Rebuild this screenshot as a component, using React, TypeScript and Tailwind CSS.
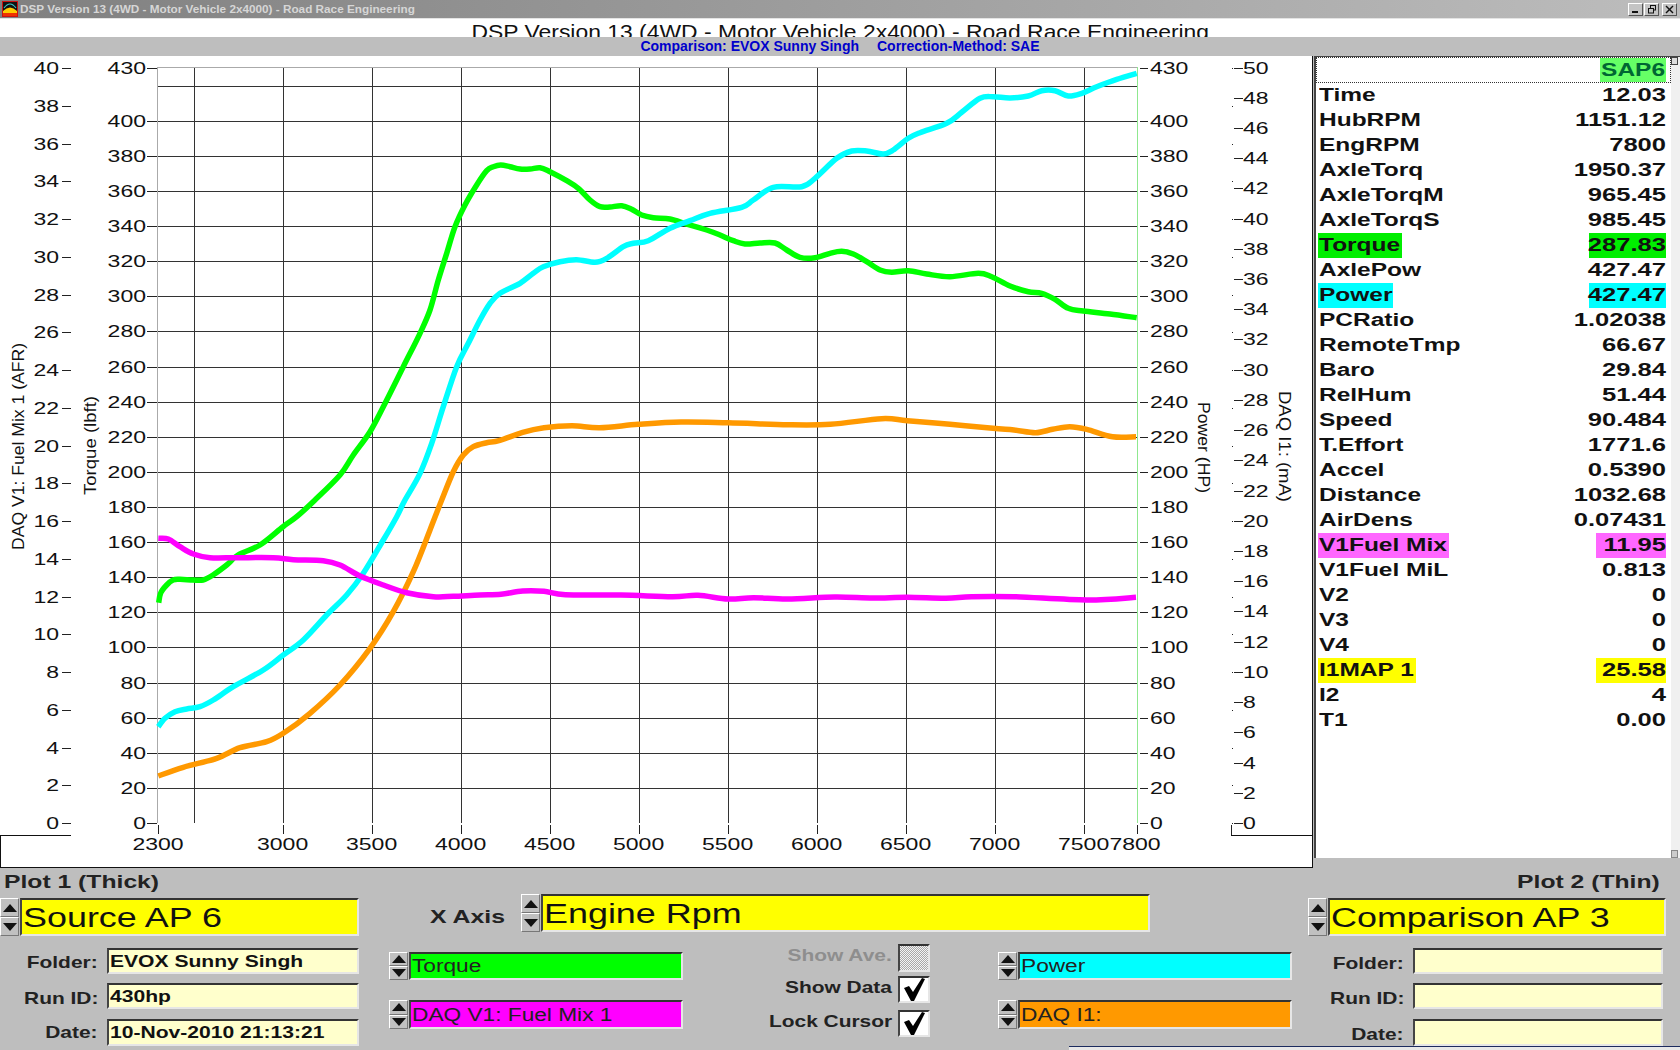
import type { ReactNode } from 'react'

type Point = [number, number]

const TORQUE: Point[] = [[158.7,602.7],[160.7,593],[166.7,585],[173,580],[180,579.3],[193,580],[203,580],[213,575],[226.7,565],[238,555],[260,545],[283,526.7],[296.7,516.7],[315,500],[340,475],[353.3,455],[370,431.7],[383.3,406.7],[403.3,366.7],[420,333.3],[430,310],[438.3,280],[446.7,253.3],[455,226.7],[465,205],[476.7,185],[486.7,170.7],[493.3,166.7],[500.7,165],[510,166.7],[520,169],[530,169],[540,167.7],[550,171.7],[566.7,180.7],[578.3,188.3],[590,200],[600,206.7],[610,207],[621.7,205.7],[631.7,209.3],[641.7,215],[653.3,217.7],[670,219],[686.7,224],[706.7,230],[720,235],[733.3,240.7],[745,244],[760,243],[775,243],[786.7,250],[800,257.3],[815,257.7],[830,253.3],[841.7,251.3],[853.3,254],[866.7,261.7],[880,270],[891.7,272.3],[908.3,270.7],[926.7,274],[950,276.7],[978.3,273.3],[991.7,276.7],[1010,286],[1028.3,291.7],[1041.7,293.3],[1055,299.3],[1068.3,308.3],[1083.3,311],[1110,314],[1136.7,317.7]]

const POWER: Point[] = [[158.3,726.7],[165,718.3],[175,711.7],[186.7,709],[200,706.7],[213.3,700],[233.3,686.7],[263.3,670],[283.3,655],[303.3,640],[326.7,615],[346.7,595],[363.3,573.3],[383.3,540],[396.7,516.7],[405,500],[420,473.3],[431.7,443.3],[443.3,406.7],[456.7,366.7],[468.3,343.3],[480,320],[490,303.3],[500,293.3],[520,283.3],[533.3,273.3],[543.3,266.7],[560,261.7],[576.7,259.7],[595,262.3],[606.7,258.3],[623.3,246.7],[633.3,243.3],[648.3,240.7],[670,228.3],[690,220.7],[710,213.3],[741.7,207.3],[753.3,200],[773.3,187.3],[801.7,186.7],[815,178.3],[836.7,158.3],[851.7,151],[866.7,151],[883.3,154],[893.3,150],[908.3,138.3],[920,132.7],[946.7,123.3],[961.7,112.3],[980,98.3],[993.3,96.7],[1010,98],[1028.3,96],[1041.7,90.7],[1055,90.7],[1068.3,96],[1081.7,93.3],[1096.7,86.7],[1116.7,79.3],[1136.7,73.3]]

const FUEL: Point[] = [[158.3,538.3],[168.3,539],[180,546.7],[193.3,554],[210,557.7],[236.7,557.7],[273.3,557.7],[293.3,559.7],[323.3,560.7],[340,565],[360,576],[383.3,585],[406.7,592.7],[433.3,596.7],[453.3,596.3],[480,595],[501,594.3],[522.7,591],[544,591.3],[565.5,594.7],[621,595],[672,596.7],[698,595.3],[728,599],[753.5,597.7],[787.7,599],[834.7,597],[873,598],[907,597.3],[945.8,598.3],[971.5,596.7],[1014,596.7],[1086.8,600],[1136,597.3]]

const DAQ_I1: Point[] = [[158.3,776],[183.3,767.3],[216.7,758.3],[240,747.7],[266.7,741.7],[283.3,733.3],[310,713.3],[340,685],[370,648.3],[393.3,611.7],[413.3,571.7],[430,530],[441.7,500],[453.3,471.7],[463.3,455],[473.3,446.7],[486.7,442.7],[499,440.7],[522.7,432.3],[544,427.7],[572,425.7],[599.7,427.7],[638,424.3],[681,422],[728,422.7],[787.7,424.7],[830.4,424.3],[881.7,418.7],[907.4,420.7],[950,424.3],[992.8,428.3],[1014,430],[1035.6,432.7],[1052.6,429.3],[1069.7,426.7],[1086.8,429.3],[1112.5,436.7],[1136,436.7]]

const ROWS: { label: string; value: string; labelBg?: string; valueBg?: string }[] = [
  { label: 'Time', value: '12.03' },
  { label: 'HubRPM', value: '1151.12' },
  { label: 'EngRPM', value: '7800' },
  { label: 'AxleTorq', value: '1950.37' },
  { label: 'AxleTorqM', value: '965.45' },
  { label: 'AxleTorqS', value: '985.45' },
  { label: 'Torque', value: '287.83', labelBg: 'w-[84px] bg-[#00ee00]', valueBg: 'w-[77px] bg-[#00ee00]' },
  { label: 'AxlePow', value: '427.47' },
  { label: 'Power', value: '427.47', labelBg: 'w-[75px] bg-[#00ffff]', valueBg: 'w-[77px] bg-[#00ffff]' },
  { label: 'PCRatio', value: '1.02038' },
  { label: 'RemoteTmp', value: '66.67' },
  { label: 'Baro', value: '29.84' },
  { label: 'RelHum', value: '51.44' },
  { label: 'Speed', value: '90.484' },
  { label: 'T.Effort', value: '1771.6' },
  { label: 'Accel', value: '0.5390' },
  { label: 'Distance', value: '1032.68' },
  { label: 'AirDens', value: '0.07431' },
  { label: 'V1Fuel Mix', value: '11.95', labelBg: 'w-[131px] bg-[#ff66ff]', valueBg: 'w-[70px] bg-[#ff66ff]' },
  { label: 'V1Fuel MiL', value: '0.813' },
  { label: 'V2', value: '0' },
  { label: 'V3', value: '0' },
  { label: 'V4', value: '0' },
  { label: 'I1MAP 1', value: '25.58', labelBg: 'w-[98px] bg-[#ffff00]', valueBg: 'w-[70px] bg-[#ffff00]' },
  { label: 'I2', value: '4' },
  { label: 'T1', value: '0.00' },
]

const DIGIT = 12.8
const yMain = (v: number) => 823 - v * 1.7555
const xRpm = (r: number) => 283 + (r - 3000) * 0.178

// catmull-rom through the traced points
function smooth(pts: Point[]) {
  let d = `M${pts[0][0]} ${pts[0][1]}`
  for (let i = 0; i < pts.length - 1; i++) {
    const p0 = pts[Math.max(i - 1, 0)]
    const p1 = pts[i]
    const p2 = pts[i + 1]
    const p3 = pts[Math.min(i + 2, pts.length - 1)]
    const c1x = p1[0] + (p2[0] - p0[0]) / 6
    const c1y = p1[1] + (p2[1] - p0[1]) / 6
    const c2x = p2[0] - (p3[0] - p1[0]) / 6
    const c2y = p2[1] - (p3[1] - p1[1]) / 6
    d += `C${c1x.toFixed(1)} ${c1y.toFixed(1)} ${c2x.toFixed(1)} ${c2y.toFixed(1)} ${p2[0]} ${p2[1]}`
  }
  return d
}

function AxisText({ x, y, children }: { x: number; y: number; children: string }) {
  return (
    <text x={x} y={y + 6} fontSize={17} fill="#111" textLength={children.length * DIGIT} lengthAdjust="spacingAndGlyphs">
      {children}
    </text>
  )
}

function SideTitle({ x, y, rotate, length, children }: { x: number; y: number; rotate: number; length: number; children: string }) {
  return (
    <text transform={`translate(${x} ${y}) rotate(${rotate})`} fontSize={16} fill="#111" textLength={length} lengthAdjust="spacingAndGlyphs">
      {children}
    </text>
  )
}

function Chart() {
  const hGrid = [20, 40, 60, 80, 100, 120, 140, 160, 180, 200, 220, 240, 260, 280, 300, 320, 340, 360, 380, 400, 420]
  const mainLabels = [0, ...hGrid.filter((v) => v !== 420), 430]
  const vGrid = [2500, 3000, 3500, 4000, 4500, 5000, 5500, 6000, 6500, 7000, 7500]
  const xLabels = [2300, 3000, 3500, 4000, 4500, 5000, 5500, 6000, 6500, 7000, 7500, 7800]
  const afr = Array.from({ length: 21 }, (_, i) => i * 2)
  const daq = Array.from({ length: 26 }, (_, i) => i * 2)

  return (
    <svg width={1312} height={811} viewBox="0 56 1312 811" className="block">
      <g shapeRendering="crispEdges">
        {hGrid.map((v) => (
          <line key={v} x1={158} x2={1137} y1={Math.round(yMain(v)) + 0.5} y2={Math.round(yMain(v)) + 0.5} stroke="#333" />
        ))}
        {vGrid.map((r) => (
          <line key={r} x1={Math.round(xRpm(r)) + 0.5} x2={Math.round(xRpm(r)) + 0.5} y1={68} y2={823} stroke="#333" />
        ))}
        <line x1={158} x2={1137} y1={67.5} y2={67.5} stroke="#aaa" />
        <line x1={157.5} x2={157.5} y1={67} y2={823} stroke="#aaa" />
        <line x1={1137.5} x2={1137.5} y1={67} y2={823} stroke="#8fe88f" />

        {mainLabels.map((v) => (
          <g key={v} stroke="#222">
            <line x1={147} x2={157} y1={Math.round(yMain(v)) + 0.5} y2={Math.round(yMain(v)) + 0.5} />
            <line x1={1140} x2={1148} y1={Math.round(yMain(v)) + 0.5} y2={Math.round(yMain(v)) + 0.5} />
          </g>
        ))}
        {afr.map((v) => (
          <line key={v} x1={62} x2={71} y1={Math.round(823 - v * 18.875) + 0.5} y2={Math.round(823 - v * 18.875) + 0.5} stroke="#222" />
        ))}
        {daq.map((v) => (
          <line key={v} x1={1234} x2={1243} y1={Math.round(823 - v * 15.11) + 0.5} y2={Math.round(823 - v * 15.11) + 0.5} stroke="#222" />
        ))}
        {afr.map((v) => (
          <rect key={v} x={1232} y={Math.round(823 - v * 18.875)} width={1} height={1} fill="#222" />
        ))}
        {xLabels.map((r) => (
          <line key={r} x1={Math.round(xRpm(r)) + 0.5} x2={Math.round(xRpm(r)) + 0.5} y1={825} y2={834} stroke="#222" />
        ))}
        <line x1={1231.5} x2={1231.5} y1={825} y2={835} stroke="#222" />
        <line x1={0} x2={71} y1={835.5} y2={835.5} stroke="#111" />
        <line x1={1231} x2={1312} y1={835.5} y2={835.5} stroke="#111" />
        <line x1={0.5} x2={0.5} y1={835} y2={867} stroke="#111" />
      </g>

      <g fill="none" strokeWidth={5.5} strokeLinejoin="round">
        <path d={smooth(TORQUE)} stroke="#00ff00" />
        <path d={smooth(POWER)} stroke="#00ffff" />
        <path d={smooth(DAQ_I1)} stroke="#ff9900" />
        <path d={smooth(FUEL)} stroke="#ff00ff" />
      </g>

      {afr.map((v) => (
        <AxisText key={v} x={59 - String(v).length * DIGIT} y={823 - v * 18.875}>
          {String(v)}
        </AxisText>
      ))}
      {mainLabels.map((v) => (
        <AxisText key={v} x={146 - String(v).length * DIGIT} y={yMain(v)}>
          {String(v)}
        </AxisText>
      ))}
      {mainLabels.map((v) => (
        <AxisText key={v} x={1150} y={yMain(v)}>
          {String(v)}
        </AxisText>
      ))}
      {daq.map((v) => (
        <AxisText key={v} x={1243} y={823 - v * 15.11}>
          {String(v)}
        </AxisText>
      ))}
      {xLabels.map((r) => (
        <AxisText key={r} x={xRpm(r) - (r === 7800 ? 28 : 26)} y={844}>
          {String(r)}
        </AxisText>
      ))}

      <SideTitle x={24} y={550} rotate={-90} length={207}>DAQ V1: Fuel Mix 1 (AFR)</SideTitle>
      <SideTitle x={96} y={495} rotate={-90} length={99}>Torque (lbft)</SideTitle>
      <SideTitle x={1198} y={402} rotate={90} length={91}>Power (HP)</SideTitle>
      <SideTitle x={1279} y={391} rotate={90} length={111}>DAQ I1: (mA)</SideTitle>
    </svg>
  )
}

function AppIcon() {
  return (
    <svg width={16} height={16} viewBox="0 0 16 16" className="shrink-0">
      <rect width={16} height={16} fill="#cc1111" />
      <rect x={1} y={1} width={14} height={14} fill="#111" />
      <path d="M1 15 L1 10 Q8 3 15 10 L15 15 Z" fill="#ffcc00" />
      <path d="M1 15 L1 12 L15 12 L15 15 Z" fill="#ee3300" />
      <path d="M2 7 Q8 -1 14 7" fill="none" stroke="#33cccc" strokeWidth={1.2} />
    </svg>
  )
}

function WinButton({ children }: { children: ReactNode }) {
  return (
    <div className="flex h-[13px] w-[15px] items-center justify-center border border-t-white border-l-white border-r-[#555] border-b-[#555] bg-[#c4c4c4]">
      {children}
    </div>
  )
}

function TitleBar() {
  return (
    <div className="flex h-[19px] items-center border-b border-[#e4e4e4] bg-linear-to-r from-[#808080] to-[#bdbdbd] pl-[2px] pr-[3px]">
      <AppIcon />
      <span className="ml-[2px] whitespace-nowrap text-[11.75px] font-bold text-[#d6d6d6]">
        DSP Version 13 (4WD - Motor Vehicle 2x4000) - Road Race Engineering
      </span>
      <div className="ml-auto flex items-center gap-[1px]">
        <WinButton>
          <svg width={9} height={9} viewBox="0 0 9 9"><rect x={1} y={6} width={6} height={2} fill="#111" /></svg>
        </WinButton>
        <div className="mr-[2px]">
          <WinButton>
            <svg width={10} height={9} viewBox="0 0 10 9" fill="none" stroke="#111">
              <rect x={3.5} y={0.5} width={5} height={4.5} />
              <rect x={1.5} y={3.5} width={5} height={4.5} fill="#c4c4c4" />
            </svg>
          </WinButton>
        </div>
        <WinButton>
          <svg width={9} height={9} viewBox="0 0 9 9" stroke="#111" strokeWidth={1.4}>
            <line x1={1} y1={1} x2={8} y2={8} />
            <line x1={8} y1={1} x2={1} y2={8} />
          </svg>
        </WinButton>
      </div>
    </div>
  )
}

function SpinHalf({ up }: { up?: boolean }) {
  return (
    <div className="flex min-h-0 flex-1 items-center justify-center border border-t-white border-l-white border-r-[#777] border-b-[#777] bg-[#c0c0c0]">
      <svg width={14} height={8} viewBox="0 0 14 8">
        <polygon points={up ? '7,0 14,8 0,8' : '0,0 14,0 7,8'} fill="#111" />
      </svg>
    </div>
  )
}

function Spinner() {
  return (
    <div className="flex h-full w-[19px] shrink-0 flex-col">
      <SpinHalf up />
      <SpinHalf />
    </div>
  )
}

function Sunken({ className, children }: { className: string; children?: ReactNode }) {
  return (
    <div className={'flex items-center overflow-hidden border-2 border-t-[#333] border-l-[#444] border-r-[#e6e6e6] border-b-[#e6e6e6] ' + className}>
      {children}
    </div>
  )
}

function BigSelect({ text, className }: { text: string; className: string }) {
  return (
    <div className={'flex ' + className}>
      <Spinner />
      <Sunken className="ml-px flex-1 bg-[#ffff00] pt-[2px]">
        <span className="ml-px inline-block origin-left scale-x-[1.33] whitespace-nowrap text-[27px] leading-none text-[#111]">{text}</span>
      </Sunken>
    </div>
  )
}

function ChannelSelect({ text, bg, height }: { text: string; bg: string; height: string }) {
  return (
    <div className={'flex ' + height}>
      <Spinner />
      <Sunken className={'ml-px flex-1 ' + bg}>
        <span className="ml-px inline-block origin-left scale-x-[1.26] whitespace-nowrap text-[18px] leading-none text-[#222]">{text}</span>
      </Sunken>
    </div>
  )
}

function FieldRow({ label, value, labelWidth, labelShift, margin, height }: { label: string; value?: string; labelWidth: string; labelShift?: string; margin: string; height: string }) {
  return (
    <div className={'flex items-center ' + margin + ' ' + height}>
      <div className={'shrink-0 text-right ' + labelWidth + ' ' + (labelShift ?? '')}>
        <span className="inline-block origin-right scale-x-[1.23] whitespace-nowrap text-[17px] font-bold leading-none text-[#222]">{label}</span>
      </div>
      <Sunken className="ml-[9px] h-full flex-1 bg-[#ffffcc]">
        {value ? (
          <span className="ml-px inline-block origin-left scale-x-[1.24] whitespace-nowrap text-[17px] font-bold leading-none text-[#111]">{value}</span>
        ) : null}
      </Sunken>
    </div>
  )
}

function CheckRow({ label, checked, disabled, className }: { label: string; checked?: boolean; disabled?: boolean; className: string }) {
  return (
    <div className={'flex items-center justify-end gap-[6px] ' + className}>
      <span className={'mb-[5px] inline-block origin-right scale-x-[1.23] whitespace-nowrap text-[17px] font-bold leading-none ' + (disabled ? 'text-[#8e8e8e]' : 'text-[#222]')}>
        {label}
      </span>
      <Sunken className={'h-full w-[32px] justify-center ' + (disabled ? 'bg-[repeating-conic-gradient(#a8a8a8_0%_25%,#f4f4f4_0%_50%)] bg-[length:2px_2px]' : 'bg-white')}>
        {checked ? (
          <svg width={24} height={23} viewBox="0 0 24 23">
            <path d="M2 10 L7 8 L11 14 L20 0 L23 1 L12 23 L9 23 Z" fill="#000" />
          </svg>
        ) : null}
      </Sunken>
    </div>
  )
}

function DataPanel() {
  return (
    <div className="ml-px flex h-[802px] min-w-0 flex-1 border-t border-l-2 border-[#444] bg-white">
      <div className="min-w-0 flex-1">
        <div className="flex h-[26px] justify-end border border-dotted border-[#333] pr-[4px]">
          <div className="flex h-[24px] w-[66px] items-center justify-end bg-[#66ff66] pr-px">
            <span className="inline-block origin-right scale-x-[1.36] text-[18px] font-bold leading-none text-[#063]">SAP6</span>
          </div>
        </div>
        {ROWS.map((row) => (
          <div key={row.label} className="flex h-[25px] items-center justify-between pl-[2px] pr-[5px] text-[18px] font-bold leading-[25px] text-[#111]">
            <div className={'h-full whitespace-nowrap pl-px ' + (row.labelBg ?? '')}>
              <span className="inline-block origin-left scale-x-[1.36]">{row.label}</span>
            </div>
            <div className={'h-full whitespace-nowrap text-right ' + (row.valueBg ?? '')}>
              <span className="inline-block origin-right scale-x-[1.42]">{row.value}</span>
            </div>
          </div>
        ))}
      </div>
      <div className="flex w-[9px] shrink-0 flex-col justify-between bg-[#f0f0f0]">
        <div className="h-[8px] w-[7px] border border-[#444] bg-[#ddd]" />
        <div className="h-[8px] w-[7px] border border-[#888] bg-[#ccc]" />
      </div>
    </div>
  )
}

export default function App() {
  return (
    <div className="relative h-[1050px] w-[1680px] overflow-hidden bg-[#bebebe] font-['Liberation_Sans',Arial,sans-serif]">
      <TitleBar />

      <div className="flex h-[18px] justify-center overflow-hidden bg-white pt-[1px]">
        <span className="inline-block scale-x-[1.09] whitespace-nowrap text-[21px] leading-[24px] text-[#111]">
          DSP Version 13 (4WD - Motor Vehicle 2x4000) - Road Race Engineering
        </span>
      </div>

      <div className="flex h-[19px] items-center justify-center gap-[18px] pb-[2px] text-[14px] font-bold leading-none text-[#0000cc]">
        <span>Comparison: EVOX Sunny Singh</span>
        <span>Correction-Method: SAE</span>
      </div>

      <div className="flex h-[812px]">
        <div className="h-full w-[1313px] shrink-0 border-r border-b border-[#111] bg-white">
          <Chart />
        </div>
        <DataPanel />
      </div>

      <div className="flex h-[182px]">
        <div className="w-[359px] shrink-0">
          <div className="h-[30px] pl-[4px] text-[19px] font-bold leading-[27px] text-[#222]">
            <span className="inline-block origin-left scale-x-[1.3] whitespace-nowrap">Plot 1 (Thick)</span>
          </div>
          <BigSelect text="Source AP 6" className="h-[38px]" />
          <FieldRow label="Folder:" value="EVOX Sunny Singh" labelWidth="w-[98px]" labelShift="mt-[4px]" margin="mt-[12px]" height="h-[26px]" />
          <FieldRow label="Run ID:" value="430hp" labelWidth="w-[98px]" labelShift="mt-[6px]" margin="mt-[9px]" height="h-[26px]" />
          <FieldRow label="Date:" value="10-Nov-2010 21:13:21" labelWidth="w-[98px]" margin="mt-[10px]" height="h-[27px]" />
        </div>

        <div className="ml-[30px] w-[902px] shrink-0 pt-[26px]">
          <div className="flex h-[38px] items-center">
            <div className="ml-[41px] w-[91px] shrink-0 pt-[7px] text-[18px] font-bold leading-none text-[#222]">
              <span className="inline-block origin-left scale-x-[1.38] whitespace-nowrap">X Axis</span>
            </div>
            <BigSelect text="Engine Rpm" className="h-full w-[629px]" />
          </div>
          <div className="mt-[12px] flex">
            <div className="w-[294px] shrink-0 pt-[8px]">
              <ChannelSelect text="Torque" bg="bg-[#00ff00]" height="h-[28px]" />
              <div className="mt-[20px]">
                <ChannelSelect text="DAQ V1: Fuel Mix 1" bg="bg-[#ff00ff]" height="h-[29px]" />
              </div>
            </div>
            <div className="ml-[86px] w-[161px] shrink-0">
              <CheckRow label="Show Ave." disabled className="h-[28px]" />
              <CheckRow label="Show Data" checked className="mt-[4px] h-[27px]" />
              <CheckRow label="Lock Cursor" checked className="mt-[7px] h-[27px]" />
            </div>
            <div className="ml-[68px] w-[294px] shrink-0 pt-[8px]">
              <ChannelSelect text="Power" bg="bg-[#00ffff]" height="h-[28px]" />
              <div className="mt-[20px]">
                <ChannelSelect text="DAQ I1:" bg="bg-[#ff9900]" height="h-[29px]" />
              </div>
            </div>
          </div>
        </div>

        <div className="ml-[17px] w-[358px] shrink-0">
          <div className="h-[30px] pr-[6px] text-right text-[19px] font-bold leading-[27px] text-[#222]">
            <span className="inline-block origin-right scale-x-[1.3] whitespace-nowrap">Plot 2 (Thin)</span>
          </div>
          <BigSelect text="Comparison AP 3" className="h-[38px]" />
          <div className="pr-[3px]">
            <FieldRow label="Folder:" labelWidth="w-[96px]" labelShift="mt-[6px]" margin="mt-[12px]" height="h-[26px]" />
            <FieldRow label="Run ID:" labelWidth="w-[96px]" labelShift="mt-[5px]" margin="mt-[9px]" height="h-[26px]" />
            <FieldRow label="Date:" labelWidth="w-[96px]" labelShift="mt-[4px]" margin="mt-[10px]" height="h-[27px]" />
          </div>
        </div>
      </div>

      <div className="absolute left-[1069px] top-[1046px] h-[4px] w-[611px] border-t border-[#1c2b5e] bg-[#e8e8e8]" />
    </div>
  )
}
